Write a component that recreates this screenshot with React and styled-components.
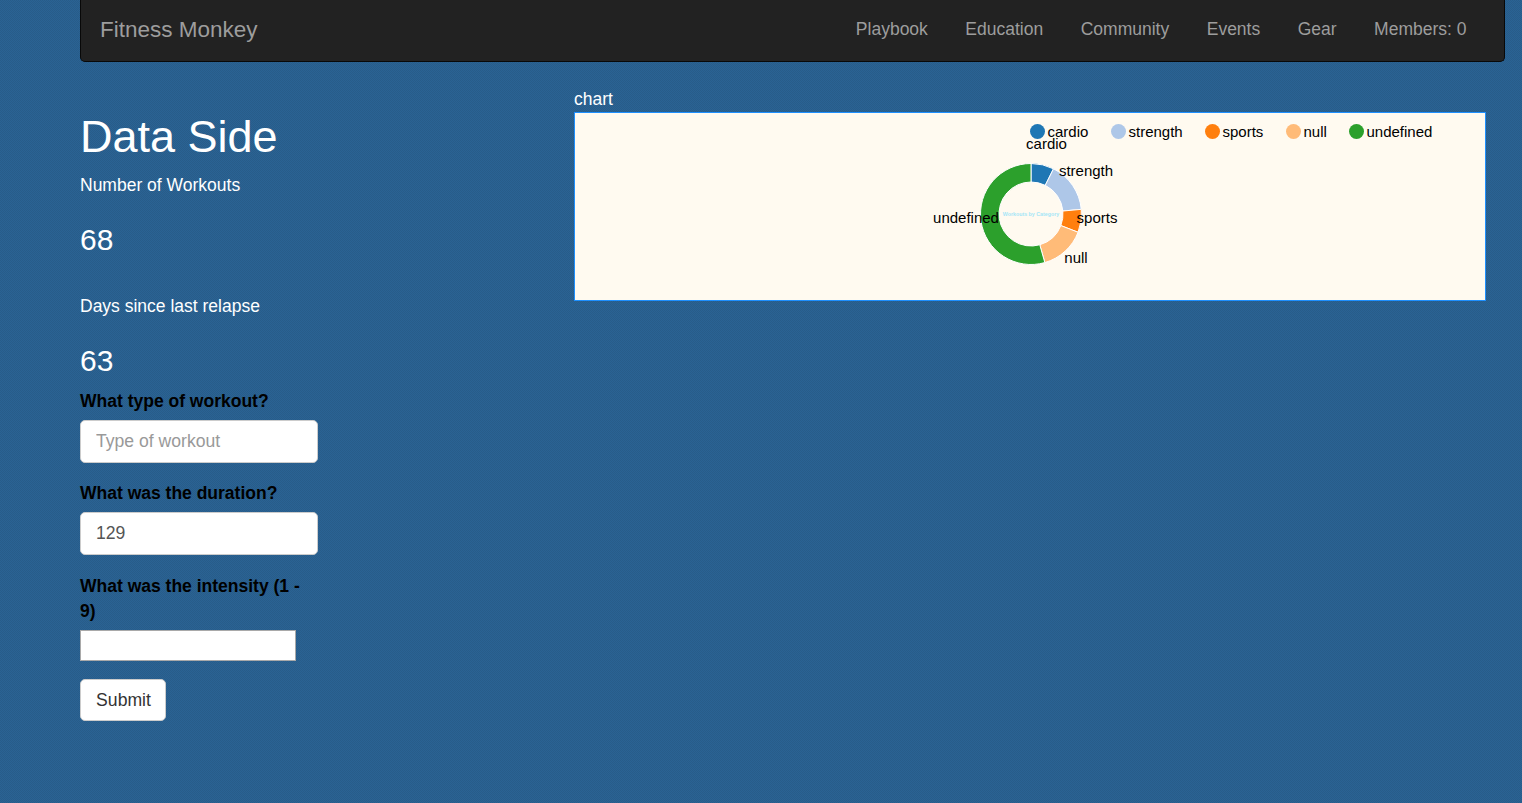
import React from "react";
import styled, { createGlobalStyle } from "styled-components";

const Global = createGlobalStyle`
  html, body { margin: 0; padding: 0; }
  body {
    background-color: #2a5f8e;
    background-image: repeating-conic-gradient(#2a6394 0 25%, #285c89 0 50%);
    background-size: 2px 2px;
    font-family: "Liberation Sans", Arial, sans-serif;
    font-size: 17.5px;
    line-height: 25px;
    color: #fff;
    min-height: 803px;
  }
  * { box-sizing: border-box; }
`;

const Page = styled.div`
  padding: 0 17px 0 80px;
`;
const Navbar = styled.nav`
  height: 62px;
  background: #222;
  border: 1px solid #080808;
  border-top: none;
  border-radius: 0 0 5px 5px;
  display: flex;
  align-items: center;
  justify-content: space-between;
  padding: 0 37.5px 2px 19px;
`;
const Brand = styled.span`
  font-size: 22.5px;
  color: #9d9d9d;
`;
const NavLinks = styled.div`
  display: flex;
  gap: 37.5px;
  color: #9d9d9d;
`;
const Columns = styled.div`
  display: flex;
`;
const Left = styled.section`
  width: 494px;
  flex: none;
  padding-top: 48px;
`;
const Title = styled.h1`
  margin: 0 0 9px;
  font-size: 45px;
  font-weight: 400;
  line-height: 54px;
`;
const Caption = styled.p`
  margin: 0 0 ${p => p.$after}px;
`;
const Stat = styled.h3`
  margin: 0 0 ${p => p.$after}px;
  font-size: 30px;
  font-weight: 400;
  line-height: 33px;
`;
const Form = styled.form`
  width: 238px;
  display: flex;
  flex-direction: column;
  margin-top: 12px;
`;
const Label = styled.label`
  font-weight: 700;
  color: #000;
  margin-bottom: 6px;
`;
const Group = styled.div`
  display: flex;
  flex-direction: column;
  margin-bottom: ${p => p.$after}px;
`;
const TextInput = styled.input`
  width: 238px;
  height: 43px;
  border: 1px solid #ccc;
  border-radius: 5px;
  padding: 0 15px;
  background: #fff;
  color: #555;
  font: 17.6px "Liberation Sans", Arial, sans-serif;
  &::placeholder { color: #999; opacity: 1; }
`;
const PlainInput = styled.input`
  width: 216px;
  height: 31px;
  border: 1px solid #a9a9a9;
  background: #fff;
  padding: 1px 2px;
  border-radius: 0;
`;
const Submit = styled.button`
  align-self: flex-start;
  width: 86px;
  height: 42px;
  background: #fff;
  border: 1px solid #ccc;
  border-radius: 5px;
  color: #333;
  font: 17.6px "Liberation Sans", Arial, sans-serif;
  padding: 0 0 0 1px;
`;
const Right = styled.section`
  width: 912px;
  flex: none;
  padding-top: 24px;
`;
const ChartLabel = styled.div`
  line-height: 26px;
`;
const ChartBox = styled.div`
  height: 189px;
  border: 1px solid #1e90ff;
  background: #fffaf0;
  overflow: hidden;
`;
const Svg = styled.svg`
  display: block;
  font-family: "Liberation Sans", Arial, sans-serif;
  font-size: 15px;
  fill: #000;
`;

const cx = 456, cy = 101, R = 50.5, r = 32;
const arc = (a0, a1) => {
  const p = (rad, a) => {
    const t = (a * Math.PI) / 180;
    return `${(cx + rad * Math.sin(t)).toFixed(2)} ${(cy - rad * Math.cos(t)).toFixed(2)}`;
  };
  const large = a1 - a0 > 180 ? 1 : 0;
  return `M${p(R, a0)}A${R} ${R} 0 ${large} 1 ${p(R, a1)}L${p(r, a1)}A${r} ${r} 0 ${large} 0 ${p(r, a0)}Z`;
};

const slices = [
  { name: "cardio", color: "#1f77b4", a0: 0, a1: 26.47, lx: 471.5, ly: 36, dot: 462.5 },
  { name: "strength", color: "#aec7e8", a0: 26.47, a1: 84.7, lx: 511, ly: 63, dot: 543.5 },
  { name: "sports", color: "#ff7f0e", a0: 84.7, a1: 111.2, lx: 522, ly: 110, dot: 637.5 },
  { name: "null", color: "#ffbb78", a0: 111.2, a1: 164.1, lx: 501, ly: 150, dot: 718.5 },
  { name: "undefined", color: "#2ca02c", a0: 164.1, a1: 360, lx: 391, ly: 110, dot: 781.5 },
];

function Chart() {
  return (
    <Svg width="910" height="187" viewBox="0 0 910 187">
      {slices.map(s => (
        <g key={s.name}>
          <circle cx={s.dot} cy="18.5" r="7.5" fill={s.color} />
          <text x={s.dot + 10} y="24">{s.name}</text>
        </g>
      ))}
      {slices.map(s => (
        <path key={s.name} d={arc(s.a0, s.a1)} fill={s.color} stroke="#fff" strokeWidth="1" />
      ))}
      {slices.map(s => (
        <text key={s.name} x={s.lx} y={s.ly} textAnchor="middle">{s.name}</text>
      ))}
      <text x={cx} y="103" textAnchor="middle" fontSize="5.3" fontWeight="700" fill="#a5e6f7">Workouts by Category</text>
    </Svg>
  );
}

export default function App() {
  return (
    <>
      <Global />
      <Page>
        <Navbar>
          <Brand>Fitness Monkey</Brand>
          <NavLinks>
            <span>Playbook</span>
            <span>Education</span>
            <span>Community</span>
            <span>Events</span>
            <span>Gear</span>
            <span>Members: 0</span>
          </NavLinks>
        </Navbar>
        <Columns>
          <Left>
            <Title>Data Side</Title>
            <Caption $after={25}>Number of Workouts</Caption>
            <Stat $after={38}>68</Stat>
            <Caption $after={25}>Days since last relapse</Caption>
            <Stat $after={0}>63</Stat>
            <Form onSubmit={e => e.preventDefault()}>
              <Group $after={18}>
                <Label>What type of workout?</Label>
                <TextInput placeholder="Type of workout" />
              </Group>
              <Group $after={19}>
                <Label>What was the duration?</Label>
                <TextInput defaultValue="129" />
              </Group>
              <Group $after={18}>
                <Label>What was the intensity (1 - 9)</Label>
                <PlainInput type="number" />
              </Group>
              <Submit type="submit">Submit</Submit>
            </Form>
          </Left>
          <Right>
            <ChartLabel>chart</ChartLabel>
            <ChartBox><Chart /></ChartBox>
          </Right>
        </Columns>
      </Page>
    </>
  );
}
